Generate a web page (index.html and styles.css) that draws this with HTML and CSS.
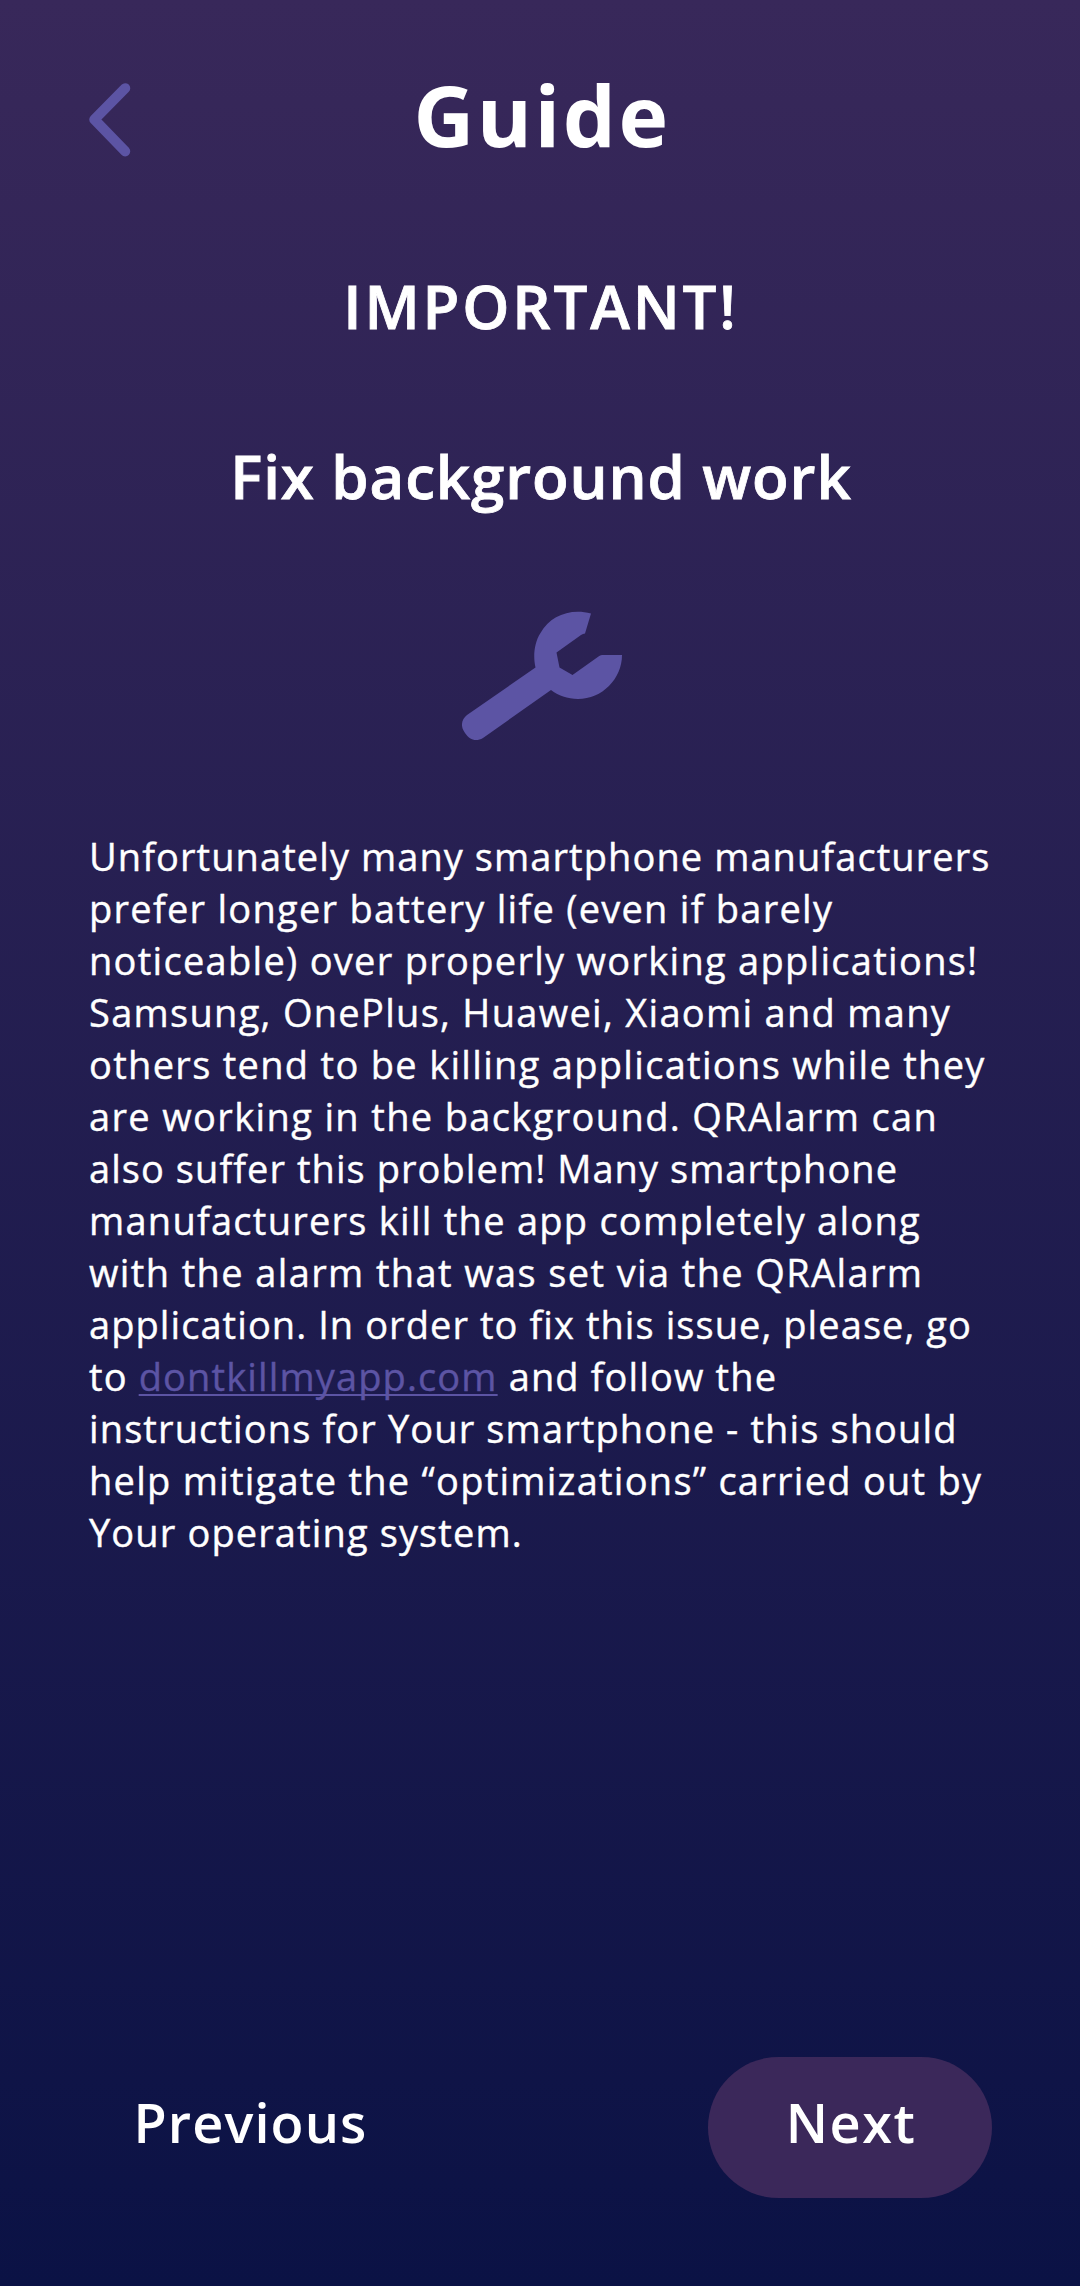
FILE: index.html
```
<!DOCTYPE html>
<html lang="en">
<head>
<meta charset="utf-8">
<title>Guide</title>
<link rel="stylesheet" href="styles.css">
</head>
<body>
<main class="screen">
  <header class="header">
    <button class="back" aria-label="Back">
      <svg width="43" height="76" viewBox="0 0 43 76" fill="none" stroke="currentColor" stroke-width="10.5" stroke-linecap="round" stroke-linejoin="round"><path d="M37 5.5L5.5 37.5L37 70"/></svg>
    </button>
    <h1 class="title">Guide</h1>
  </header>
  <h2 class="heading important">IMPORTANT!</h2>
  <h2 class="heading topic">Fix background work</h2>
  <svg class="wrench" width="160" height="130" viewBox="0 0 160 130" fill="currentColor"><path d="M129 2.500L123 22.500Q121 22.500 119 24L94.500 41.500L97.500 56.500L110.500 64L136.500 45.500Q138 44 140 44H160C160 68 140 88 116 88C105.500 88 96 84.500 89 79L21 127C14 131 7.500 129 3 122L1.500 119.500C-1.500 114 0 108 5 104L73.500 56.500C71 46 72 32 78.500 22C88 5 108 -3 129 2.500Z"/></svg>
  <p class="copy">
    <span class="line">Unfortunately many smartphone manufacturers</span>
    <span class="line">prefer longer battery life (even if barely</span>
    <span class="line">noticeable) over properly working applications!</span>
    <span class="line">Samsung, OnePlus, Huawei, Xiaomi and many</span>
    <span class="line">others tend to be killing applications while they</span>
    <span class="line">are working in the background. QRAlarm can</span>
    <span class="line">also suffer this problem! Many smartphone</span>
    <span class="line">manufacturers kill the app completely along</span>
    <span class="line">with the alarm that was set via the QRAlarm</span>
    <span class="line">application. In order to fix this issue, please, go</span>
    <span class="line">to <a class="link" href="#">dontkillmyapp.com</a> and follow the</span>
    <span class="line">instructions for Your smartphone - this should</span>
    <span class="line">help mitigate the “optimizations” carried out by</span>
    <span class="line">Your operating system.</span>
  </p>
  <footer class="footer">
    <button class="btn">Previous</button>
    <button class="btn primary">Next</button>
  </footer>
</main>
</body>
</html>
```

FILE: styles.css
```
* { box-sizing: border-box; }

body {
  margin: 0;
  background: #0b1245;
}

.screen {
  display: flex;
  flex-direction: column;
  height: 2286px;
  padding: 58px 88px 88px;
  color: #fff;
  font-family: "Open Sans", sans-serif;
  background: linear-gradient(#38285a, #0b1245);
}

.header {
  display: grid;
  grid-template-columns: 43px 1fr 43px;
  align-items: center;
  height: 114px;
}

.back {
  display: flex;
  padding: 10px 0 0 1px;
  border: 0;
  background: none;
  color: #5c54a4;
}

.title {
  margin: 0;
  padding-left: 4px;
  font-size: 84px;
  font-weight: 700;
  line-height: 114px;
  letter-spacing: 2.54px;
  text-align: center;
}

.heading {
  margin: 0;
  padding-left: 2px;
  font-size: 60px;
  font-weight: 600;
  line-height: 82px;
  text-align: center;
  -webkit-text-stroke: 0.8px currentColor;
}

.important { margin-top: 93px; letter-spacing: 2.84px; }
.topic { margin-top: 88px; letter-spacing: 0.89px; }

.wrench {
  display: block;
  margin: 94px 0 0 374px;
  color: #5c54a4;
}

.copy {
  margin: 89px 0 0 1px;
  font-size: 38px;
  line-height: 52px;
  letter-spacing: 1.26px;
  white-space: nowrap;
  -webkit-text-stroke: 0.4px currentColor;
}

.line { display: block; }
.line:nth-child(1) { letter-spacing: 1.08px; }
.line:nth-child(3) { letter-spacing: 1.29px; }
.line:nth-child(4) { letter-spacing: 1.3px; }
.line:nth-child(5) { letter-spacing: 1.31px; }
.line:nth-child(6) { letter-spacing: 1.36px; }
.line:nth-child(7) { letter-spacing: 1.06px; }
.line:nth-child(9) { letter-spacing: 1.38px; }
.line:nth-child(10) { letter-spacing: 1.07px; }
.line:nth-child(11) { letter-spacing: 1.13px; }
.line:nth-child(12) { letter-spacing: 1.12px; }
.line:nth-child(13) { letter-spacing: 1.26px; }
.line:nth-child(14) { letter-spacing: 1.12px; }

.link {
  color: #5c54a4;
  text-decoration: underline;
  text-decoration-thickness: 2px;
  text-decoration-skip-ink: none;
  text-underline-offset: 3px;
}

.footer {
  display: flex;
  justify-content: space-between;
  margin-top: auto;
}

.btn {
  width: 284px;
  height: 141px;
  padding: 0 0 11px 2px;
  border: 0;
  border-radius: 71px;
  background: none;
  color: #fff;
  font: 600 54px/74px "Open Sans", sans-serif;
  letter-spacing: 1.5px;
}

.btn:first-child { width: 323px; letter-spacing: 1.1px; }
.primary { background: #3b285a; }
```
